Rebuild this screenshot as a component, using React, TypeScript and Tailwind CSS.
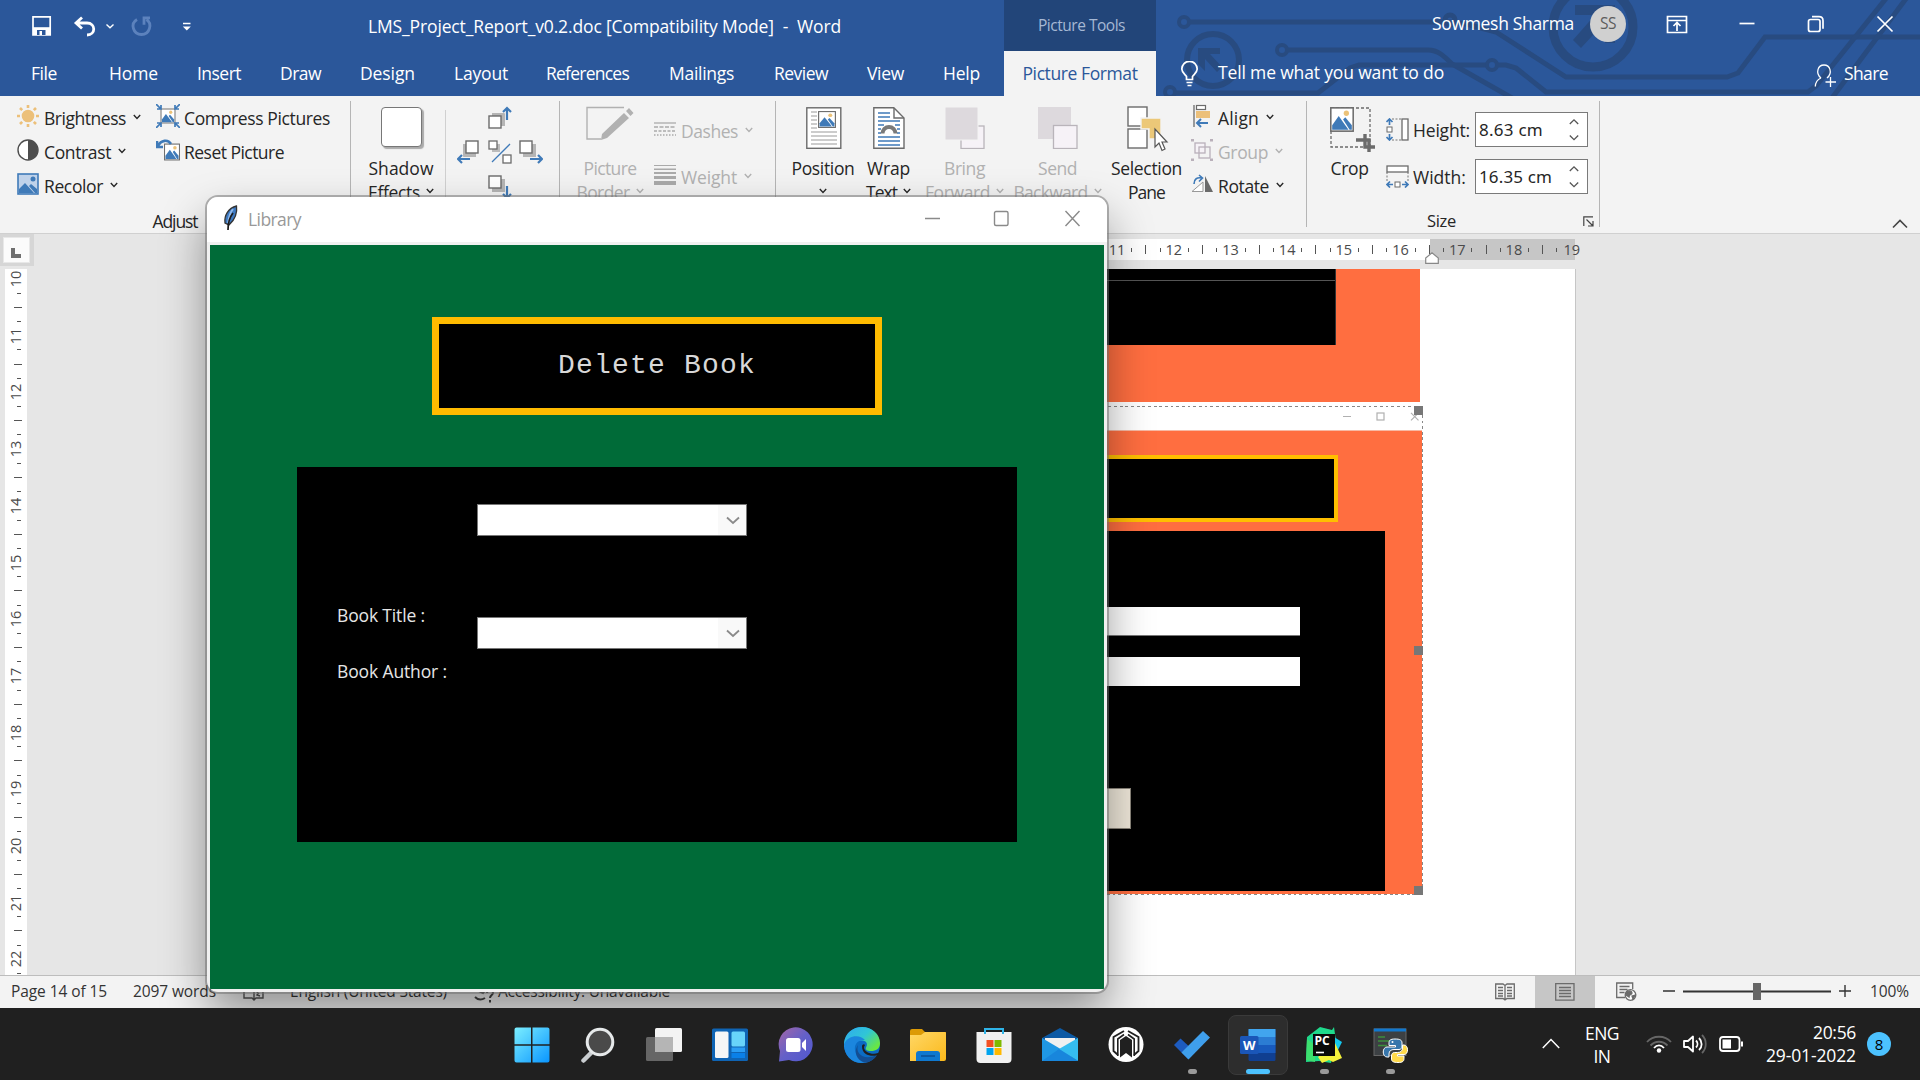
import { useLayoutEffect, useRef, type ReactNode } from "react";

/* Text line spread to a fixed width through letter spacing. */
function T({ w, children, className = "" }: { w: number; children: string; className?: string }) {
  const ref = useRef<HTMLSpanElement>(null);
  useLayoutEffect(() => {
    const el = ref.current;
    if (!el) return;
    el.style.letterSpacing = "0px";
    const natural = el.getBoundingClientRect().width;
    el.style.letterSpacing = `${(w - natural) / children.length}px`;
  }, [w, children]);
  return (
    <span ref={ref} className={"inline-block whitespace-pre shrink-0 " + className}>
      {children}
    </span>
  );
}

function Chev({ className = "" }: { className?: string }) {
  return (
    <svg width="8" height="6" viewBox="0 0 8 6" className={"shrink-0 " + className} fill="none" stroke="currentColor" strokeWidth="1.4">
      <path d="M0.8 1 4 4.4 7.2 1" />
    </svg>
  );
}

function Picture({ x = 0, y = 0, w = 22, h = 22, fill = "#fff" }) {
  return (
    <g transform={`translate(${x} ${y}) scale(${w / 22} ${h / 22})`}>
      <rect x=".75" y=".75" width="20.5" height="20.5" fill={fill} stroke="#6b6b6b" strokeWidth="1.4" />
      <path d="M2 20v-4l6-8 6 8 3 4z" fill="#3f7ab8" />
      <path d="M12 11l2-2 6 7v4h-2z" fill="#3f7ab8" />
      <circle cx="15" cy="5.5" r="2.4" fill="#ecc278" />
    </g>
  );
}

/* ---------- Title bar and tabs ---------- */

function Circuit() {
  return (
    <svg width="764" height="96" viewBox="1156 0 764 96" className="absolute left-[1156px] top-0" fill="none" stroke="#284b80" strokeWidth="5">
      <circle cx="1184" cy="22" r="5" strokeWidth="4" />
      <path d="M1189 22H1450l16 2 30 8 70 45H1727l11-4 27-36H1920" />
      <circle cx="1450" cy="20" r="5" />
      <circle cx="1213" cy="60" r="26" strokeWidth="6" />
      <path d="M1198 64V48h22v6h-10l12 13-5 5-12-13v12z" fill="#284b80" stroke="none" />
      <circle cx="1282" cy="50" r="5" strokeWidth="4" />
      <path d="M1288 50H1428c10 0 16 6 24 14l60 34" />
      <circle cx="1170" cy="92" r="5" strokeWidth="4" />
      <path d="M1176 93H1318l32-25 9-3H1486" />
      <circle cx="1492" cy="65" r="5" strokeWidth="4" />
      <path d="M1498 65H1506l10 3 30 24H1808l8-6L1888-4M1832 98l76-102" />
      <circle cx="1593" cy="27" r="40" strokeWidth="9" />
      <path d="M1575 5h40v38h-10V22l-24 26-8-8 22-25h-20z" fill="#284b80" stroke="none" />
    </svg>
  );
}

const tabs: [string, number, number][] = [
  ["File", 31, 26],
  ["Home", 52, 49],
  ["Insert", 39, 44],
  ["Draw", 39, 41],
  ["Design", 39, 55],
  ["Layout", 39, 54],
  ["References", 38, 83],
  ["Mailings", 40, 65],
  ["Review", 40, 54],
  ["View", 39, 37],
  ["Help", 39, 37],
];

function Header() {
  return (
    <header className="relative h-24 bg-[#2b579a] text-white">
      <Circuit />
      <div className="relative flex h-[51px] items-center">
        <svg width="200" height="24" viewBox="0 0 200 24" className="shrink-0" fill="none">
          <path d="M33 2.8h17.2v18H33z" stroke="#fff" strokeWidth="1.7" />
          <path d="M33 13.2h17.2v7.6H33z" fill="#fff" />
          <path d="M37 16h8.5v5H37z" fill="#2b579a" />
          <path d="M39.5 17h2.5v4h-2.5z" fill="#fff" />
          <path d="M82 3.5 76 9l6 5.5M76.5 9H87c9 0 9 12 0 12" stroke="#fff" strokeWidth="2.8" />
          <path d="M106.5 10.5l3.5 3.3 3.5-3.3" stroke="#fff" strokeWidth="1.4" />
          <path d="M137 5.5c-7 4-4 15 4.5 15s11-11 5-15M150 3.8h-6v7" stroke="#5c82bd" strokeWidth="2.8" />
          <path d="M183 9.5h7.5" stroke="#fff" strokeWidth="1.5" />
          <path d="M182.8 12.5h8l-4 4z" fill="#fff" />
        </svg>
        <div className="ml-[168px] flex w-[636px] text-[17.5px] leading-6">
          <T w={473}>{"LMS_Project_Report_v0.2.doc [Compatibility Mode]  -  Word"}</T>
        </div>
        <div className="flex h-full w-[152px] items-center justify-center bg-[#224579] pl-[3px] text-[15.5px] text-[#a6b8d4]">
          <T w={87}>Picture Tools</T>
        </div>
        <div className="ml-[276px] flex h-full items-center pb-1 text-[17.5px]">
          <T w={142}>Sowmesh Sharma</T>
          <div className="ml-4 flex size-9 items-center justify-center rounded-full bg-[#d0d0d0] text-[15.5px] text-[#5d5d5d]">
            <T w={16}>SS</T>
          </div>
          <svg width="230" height="24" viewBox="1665.5 11 230 24" className="ml-[39px]" fill="none" stroke="#fff" strokeWidth="1.7">
            <path d="M1668 15.5h19v16h-19zM1668 19.5h19M1677.5 30v-8M1674 25l3.5-3.5 3.5 3.5" />
            <path d="M1740 22.5h15" />
            <rect x="1809" y="18.5" width="11.5" height="12" rx="2" />
            <path d="M1812.5 15.7h7c2.5 0 4 1.5 4 4v8" />
            <path d="M1878 15.5l15 15M1893 15.5l-15 15" />
          </svg>
        </div>
      </div>
      <nav className="relative flex h-[45px] items-center text-[17.5px]">
        {tabs.map(([t, gap, w]) => (
          <div key={t} className="flex shrink-0 justify-end" style={{ width: gap + w }}>
            <T w={w}>{t}</T>
          </div>
        ))}
        <div className="ml-[24px] flex h-full w-[152px] shrink-0 items-center justify-center bg-[#f3f3f3] text-[#2b579a]">
          <T w={115}>Picture Format</T>
        </div>
        <svg width="20" height="26" viewBox="0 0 20 26" className="ml-[24px] shrink-0" fill="none" stroke="#fff" strokeWidth="1.7">
          <path d="M6.5 18.5v-3C4 12.5 1.8 11 1.8 8a7.7 7.7 0 0 1 15.4 0c0 3-2.2 4.5-4.7 7.5v3zM6.5 21.5h6M7.5 24.5h4" />
        </svg>
        <div className="ml-[18px] flex w-[596px] shrink-0 pb-0.5">
          <T w={226}>Tell me what you want to do</T>
        </div>
        <svg width="24" height="24" viewBox="0 0 24 24" className="mt-1 shrink-0" fill="none" stroke="#fff" strokeWidth="1.3">
          <path d="M7 14c-6-5-3-13 3-13s9 8 3 13M7 14C3.500 15.500 1.500 18.500 1.300 22.500M11.500 18H22M16.500 13v10" />
        </svg>
        <T w={44} className="ml-[6px]">Share</T>
      </nav>
    </header>
  );
}

/* ---------- Ribbon ---------- */

function Row({ icon, text, w, chev = true, dim = false, h = "h-[34px]" }: { icon: ReactNode; text: string; w: number; chev?: boolean; dim?: boolean; h?: string }) {
  return (
    <div className={"flex items-center " + h + (dim ? " text-[#b1b1b1]" : "")}>
      {icon}
      <T w={w} className="ml-[5px]">{text}</T>
      {chev && <Chev className="ml-[7px] -mt-0.5" />}
    </div>
  );
}

function Big({ icon, a, aw, b, bw, chev = true, width, dim = false }: { icon: ReactNode; a: string; aw: number; b?: string; bw?: number; chev?: boolean; width: string; dim?: boolean }) {
  return (
    <div className={"flex shrink-0 flex-col items-center " + width + (dim ? " text-[#b1b1b1]" : "")}>
      <div className="flex h-[60px] items-start pt-[10px]">{icon}</div>
      <div className="flex h-6 items-center">
        <T w={aw}>{a}</T>
      </div>
      <div className="flex h-6 items-center gap-[6px]">
        {b && <T w={bw ?? 0}>{b}</T>}
        {chev && <Chev className="-mt-0.5" />}
      </div>
    </div>
  );
}

function Nudge({ dir }: { dir: "up" | "down" | "left" | "right" }) {
  const arrows = {
    up: "M19 14V2M15 6l4-4 4 4",
    down: "M19 11v12M15 19l4 4 4-4",
    left: "M13 19H1M5 15l-4 4 4 4",
    right: "M11 19h12M19 15l4 4-4 4",
  };
  const sx = dir === "left" ? 9 : 1;
  const sy = dir === "up" ? 10 : 1;
  const ox = dir === "left" ? -3 : 3;
  const oy = dir === "up" ? -3 : 3;
  return (
    <svg width="24" height="24" viewBox="0 0 24 24" fill="none">
      <rect x={sx + ox} y={sy + oy} width="13" height="13" fill="#b5b5b5" />
      <path d={arrows[dir]} stroke="#f3f3f3" strokeWidth="4" />
      <rect x={sx} y={sy} width="12" height="12" fill="#fff" stroke="#6b6b6b" strokeWidth="1.4" />
      <path d={arrows[dir]} stroke="#3f7ab8" strokeWidth="2.2" />
    </svg>
  );
}

function Field({ text, w }: { text: string; w: number }) {
  return (
    <div className="ml-[5px] flex h-[35px] w-[113px] items-center justify-between border border-[#7a7a7a] bg-white pr-2 pl-[3px]">
      <T w={w} className="font-['Noto_Sans'] text-[17px]">{text}</T>
      <svg width="10" height="24" viewBox="0 0 10 24" fill="none" stroke="#555" strokeWidth="1.3">
        <path d="M.8 6 5 1.8 9.2 6M.8 17.5l4.2 4.2 4.2-4.2" />
      </svg>
    </div>
  );
}

function Ribbon() {
  return (
    <section className="flex h-[138px] border-b border-[#d0d0d0] bg-[#f3f3f3] text-[17.5px] leading-6 text-[#262626]">
      <div className="flex w-[350px] shrink-0 flex-col">
        <div className="flex h-[113px] pt-[5px] pl-[17px]">
          <div className="w-[139px]">
            <Row
              text="Brightness"
              w={82}
              icon={
                <svg width="22" height="22" viewBox="0 0 22 22" className="-mt-1" stroke="#ecc07a" strokeWidth="2.6">
                  <circle cx="11" cy="11" r="5" fill="#ecc07a" />
                  <path d="M11 0v3M11 19v3M0 11h3M19 11h3M3 3l2.2 2.2M16.8 16.8 19 19M19 3l-2.2 2.2M5.2 16.8 3 19" />
                </svg>
              }
            />
            <Row
              text="Contrast"
              w={67}
              icon={
                <svg width="22" height="22" viewBox="0 0 22 22" className="-mt-1">
                  <circle cx="11" cy="11" r="10" fill="#fff" stroke="#4d4d4d" strokeWidth="1.4" />
                  <path d="M11 1a10 10 0 0 1 0 20z" fill="#4d4d4d" />
                </svg>
              }
            />
            <Row
              text="Recolor"
              w={59}
              icon={
                <svg width="22" height="22" viewBox="0 0 22 22" className="-mt-1">
                  <rect x="1" y="1" width="20" height="20" fill="#bfd2ea" stroke="#3f7ab8" strokeWidth="1.6" />
                  <path d="M2 20v-4l6-6 9 10zM12 13l2-2 6 5v4h-2z" fill="#3f7ab8" />
                  <circle cx="16" cy="6" r="2.5" fill="#3f7ab8" />
                </svg>
              }
            />
          </div>
          <div>
            <Row
              text="Compress Pictures"
              w={146}
              chev={false}
              icon={
                <svg width="24" height="24" viewBox="0 0 24 24" className="-mt-1 -mr-[1px]" fill="none">
                  <Picture x={4.5} y={4.5} w={15} h={15} />
                  <path d="M0 0l5 5M5 1v4H1M24 0l-5 5M19 1v4h4M0 24l5-5M1 19h4v4M24 24l-5-5M23 19h-4v4" stroke="#3f7ab8" strokeWidth="1.7" />
                </svg>
              }
            />
            <Row
              text="Reset Picture"
              w={100}
              chev={false}
              icon={
                <svg width="24" height="22" viewBox="0 0 24 22" className="-mt-1 -mr-[1px]" fill="none">
                  <Picture x={8} y={4.5} w={16} h={17} />
                  <path d="M2 7c3-6 10-7 13-2M1 2v6h6" stroke="#3f7ab8" strokeWidth="2.6" />
                </svg>
              }
            />
          </div>
        </div>
        <div className="flex h-6 items-center justify-center">
          <T w={45}>Adjust</T>
        </div>
      </div>

      <div className="flex w-[209px] shrink-0">
        <div className="mt-[5px] h-[126px] w-px bg-[#b5b5b5]" />
        <Big
          width="w-[100px]"
          a="Shadow"
          aw={65}
          b="Effects"
          bw={52}
          icon={<div className="mt-px h-[40px] w-[41px] rounded-[4px] border-[1.5px] border-[#777] bg-white shadow-[2px_2px_1px_#aaa]" />}
        />
        <div className="mt-[14px] ml-[-6px] h-[117px] w-px bg-[#d0d0d0]" />
        <div className="ml-[11px] grid h-[116px] w-[86px] grid-cols-[24px_24px_24px] grid-rows-[34px_35px_24px] gap-x-[7px] pt-[10px]">
          <span />
          <Nudge dir="up" />
          <span />
          <Nudge dir="left" />
          <svg width="24" height="24" viewBox="0 0 24 24" fill="#fff" stroke="#6b6b6b" strokeWidth="1.3">
            <rect x="4" y="4" width="8" height="8" fill="#bbb" stroke="none" />
            <rect x="1" y="1" width="8" height="8" />
            <rect x="15" y="15" width="8" height="8" />
            <path d="M22 4 4 22" stroke="#3f7ab8" />
          </svg>
          <Nudge dir="right" />
          <span />
          <Nudge dir="down" />
          <span />
        </div>
      </div>

      <div className="flex w-[216px] shrink-0">
        <div className="mt-[5px] h-[126px] w-px bg-[#b5b5b5]" />
        <Big
          width="w-[100px]"
          dim
          a="Picture"
          aw={53}
          b="Border"
          bw={53}
          icon={
            <svg width="48" height="36" viewBox="0 0 48 36" fill="none">
              <path d="M38 1.5H1V33h14" stroke="#b1b1b1" strokeWidth="1.4" />
              <path d="m16 28 22-21 5 5-22 20-6 2zM40 5l3-3 4.5 5-3 3z" fill="#b1b1b1" />
            </svg>
          }
        />
        <div className="-ml-1.5 pt-[12px]">
          <Row
            dim
            text="Dashes"
            w={57}
            h="h-[46px]"
            icon={
              <svg width="22" height="16" viewBox="0 0 22 16" className="-mt-1" stroke="#aaa" strokeWidth="1.3">
                <path d="M0 2h22" />
                <path d="M0 6h22" strokeDasharray="4 1.5" />
                <path d="M0 10h22" strokeDasharray="3 1.5" />
                <path d="M0 14h22" strokeDasharray="1.5 1.5" />
              </svg>
            }
          />
          <Row
            dim
            text="Weight"
            w={56}
            h="h-[46px]"
            icon={
              <svg width="22" height="20" viewBox="0 0 22 20" className="-mt-1" fill="#aaa">
                <path d="M0 0h22v1H0zM0 3.5h22v1.5H0zM0 7h22v2H0zM0 11h22v3H0zM0 16h22v4H0z" />
              </svg>
            }
          />
        </div>
      </div>

      <div className="flex w-[531px] shrink-0">
        <div className="mt-[5px] mr-[14px] h-[126px] w-px bg-[#b5b5b5]" />
        <Big
          width="w-[66px]"
          a="Position"
          aw={63}
          icon={
            <svg width="36" height="42" viewBox="0 0 36 42" className="ml-px mt-px" fill="none">
              <rect x=".8" y=".8" width="34" height="40.5" fill="#fff" stroke="#6b6b6b" strokeWidth="1.4" />
              <path d="M5 5h6M5 9h6M5 13h6M5 17h6M5 21h6M5 25h26M5 29h26M5 33h26M5 37h26" stroke="#999" strokeWidth="1.2" />
              <Picture x={12} y={4} w={18} h={17} />
            </svg>
          }
        />
        <Big
          width="w-[65px]"
          a="Wrap"
          aw={43}
          b="Text"
          bw={31}
          icon={
            <svg width="32" height="42" viewBox="0 0 32 42" className="ml-px mt-px" fill="none">
              <path d="M.8.8h20L31 11v30.3H.8z" fill="#fff" stroke="#6b6b6b" strokeWidth="1.4" />
              <path d="M21 1v10h10" stroke="#6b6b6b" strokeWidth="1.4" />
              <path d="M5 6h12M5 10h12M5 14h22M5 18h6M22 18h5M5 22h3M24 22h3M5 26h3M24 26h3M5 30h22M5 34h22M5 38h22" stroke="#3f7ab8" strokeWidth="1.6" />
              <path d="M9.5 26.5a6.5 6.5 0 0 1 13 0" stroke="#7a7a7a" strokeWidth="4" />
            </svg>
          }
        />
        <Big
          width="w-[87px]"
          dim
          a="Bring"
          aw={41}
          b="Forward"
          bw={65}
          icon={
            <svg width="40" height="42" viewBox="0 0 40 42" className="mt-px">
              <rect x="16" y="19" width="23" height="22.5" fill="#f6f2f7" stroke="#b9b4ba" strokeWidth="1.3" />
              <rect x="0" y="0" width="33" height="33" fill="#ddd9dd" stroke="#f3f3f3" />
            </svg>
          }
        />
        <Big
          width="w-[99px]"
          dim
          a="Send"
          aw={39}
          b="Backward"
          bw={74}
          icon={
            <svg width="40" height="42" viewBox="0 0 40 42" className="mt-px">
              <rect x="0" y="0" width="33" height="32" fill="#ddd9dd" />
              <rect x="15.5" y="18.5" width="23.5" height="23" fill="#f6f2f7" stroke="#b9b4ba" strokeWidth="1.3" />
            </svg>
          }
        />
        <Big
          width="w-[79px]"
          chev={false}
          a="Selection"
          aw={71}
          b="Pane"
          bw={37}
          icon={
            <svg width="42" height="46" viewBox="0 0 42 46" className="ml-0.5" fill="#fff" stroke="#6b6b6b" strokeWidth="1.4">
              <rect x="1" y="1" width="19" height="19" />
              <rect x="1" y="23" width="19" height="19" />
              <path d="M14 12h20v21H22V23h-8z" fill="#ecc878" stroke="#f3f3f3" />
              <path d="M28 23v18l4-4 3 7.5 3-1.5-3-7h5z" stroke="#555" strokeWidth="1.2" />
            </svg>
          }
        />
        <div className="ml-[5px] pt-[5px]">
          <Row
            text="Align"
            w={41}
            icon={
              <svg width="22" height="24" viewBox="0 0 22 24" className="-mt-1" fill="none">
                <path d="M3 1v22" stroke="#6b6b6b" strokeWidth="1.3" />
                <rect x="5.5" y="1.5" width="9" height="4" stroke="#6b6b6b" strokeWidth="1.2" fill="#fff" />
                <rect x="5" y="7" width="14" height="7" fill="#ecc07a" />
                <path d="M17 19H6M10 15l-4 4 4 4" stroke="#3f7ab8" strokeWidth="2" />
              </svg>
            }
          />
          <Row
            dim
            text="Group"
            w={50}
            icon={
              <svg width="22" height="22" viewBox="0 0 22 22" className="-mt-1" fill="none" stroke="#b9b0ba" strokeWidth="1.3">
                <rect x="4" y="4" width="10" height="10" fill="#f6f2f7" />
                <rect x="8" y="8" width="11" height="11" />
                <path d="M0 1h3M19 1h3M0 21h3M19 21h3" strokeWidth="3" />
              </svg>
            }
          />
          <Row
            text="Rotate"
            w={51}
            icon={
              <svg width="22" height="20" viewBox="0 0 22 20" className="-mt-1" fill="none">
                <path d="M1 17.5 12 8v9.5z" fill="#fff" stroke="#999" />
                <path d="M14 18V2l8 16z" fill="#6b6b6b" />
                <path d="M3 10c0-5 3-7 8-6M8 1l3.5 3L8 7.5" stroke="#3f7ab8" strokeWidth="1.6" />
              </svg>
            }
          />
        </div>
      </div>

      <div className="flex w-[294px] shrink-0">
        <div className="mt-[5px] h-[126px] w-px bg-[#b5b5b5]" />
        <div className="flex flex-col">
          <div className="flex h-[113px]">
            <Big
              width="w-[85px]"
              chev={false}
              a="Crop"
              aw={38}
              icon={
                <svg width="45" height="46" viewBox="0 0 45 46" className="mt-px ml-1.5" fill="none">
                  <path d="M1 1h39v39H1z" stroke="#6b6b6b" strokeWidth="1.3" strokeDasharray="3 2" />
                  <Picture x={0} y={0} w={24} h={25} />
                  <path d="M35 27v13h10M26 33h13v12" stroke="#6b6b6b" strokeWidth="3.4" />
                </svg>
              }
            />
            <div className="-ml-[6px] pt-[10px]">
              <div className="flex h-[47px] items-center">
                <svg width="23" height="23" viewBox="0 0 23 23" fill="none">
                  <path d="M6 1h10M6 22h10" stroke="#777" strokeDasharray="2 1.5" />
                  <rect x="16" y="1" width="6" height="21" fill="#fff" stroke="#6b6b6b" strokeWidth="1.3" />
                  <rect x="1" y="9" width="5" height="5" stroke="#6b6b6b" fill="#fff" />
                  <path d="M3.5 7V1M.5 4l3-3 3 3M3.5 16v6M.5 19l3 3 3-3" stroke="#3f7ab8" strokeWidth="1.7" />
                </svg>
                <T w={57} className="ml-1">Height:</T>
                <Field text="8.63 cm" w={64} />
              </div>
              <div className="flex h-[47px] items-center">
                <svg width="23" height="23" viewBox="0 0 23 23" fill="none">
                  <path d="M1 7v10M22 7v10" stroke="#777" strokeDasharray="2 1.5" />
                  <rect x="1" y="1" width="21" height="6" fill="#fff" stroke="#6b6b6b" strokeWidth="1.3" />
                  <rect x="9" y="17" width="5" height="5" stroke="#6b6b6b" fill="#fff" />
                  <path d="M7 19.5H1M4 16.5l-3 3 3 3M16 19.5h6M19 16.5l3 3-3 3" stroke="#3f7ab8" strokeWidth="1.7" />
                </svg>
                <div className="flex w-[61px] pl-1">
                  <T w={53}>Width:</T>
                </div>
                <Field text="16.35 cm" w={73} />
              </div>
            </div>
          </div>
          <div className="flex h-6 items-center">
            <T w={29} className="ml-[120px] text-[16.5px]">Size</T>
            <svg width="11" height="11" viewBox="0 0 11 11" className="ml-[127px]" fill="none" stroke="#444" strokeWidth="1.2">
              <path d="M10 .8H.8V10M3.5 3.5 10 10M10 5v5H5" />
            </svg>
          </div>
        </div>
        <div className="mt-[5px] ml-auto h-[126px] w-px bg-[#b5b5b5]" />
      </div>
      <svg width="16" height="10" viewBox="0 0 16 10" className="mt-[123px] ml-[292px]" fill="none" stroke="#444" strokeWidth="1.6">
        <path d="M1 8.5 8 1.5l7 7" />
      </svg>
    </section>
  );
}

/* ---------- Document area ---------- */

const hNums = [11, 12, 13, 14, 15, 16, 17, 18];
const vNums = [10, 11, 12, 13, 14, 15, 16, 17, 18, 19, 20, 21, 22];

function HRuler() {
  return (
    <div className="ml-[1066px] flex h-[21px] shrink-0 text-[14.5px] leading-[21px] text-[#4a4a4a]">
      <div className="relative flex w-[475px] shrink-0 bg-[linear-gradient(to_right,#fff_330px,#c6c6c6_330px)] pl-[10px]">
        {hNums.map((n) => (
          <div key={n} className="grid w-[56.7px] shrink-0 grid-cols-4 items-center justify-items-center">
            <span className="w-5 text-center">{n}</span>
            <i className="ml-px h-[4px] w-px bg-[#555]" />
            <i className="ml-px h-[9px] w-px bg-[#555]" />
            <i className="ml-px h-[4px] w-px bg-[#555]" />
          </div>
        ))}
        <span>19</span>
        <svg width="14" height="12" viewBox="0 0 14 12" className="absolute top-[13px] left-[325px]">
          <path d="M.7 11.3V6L7 .8 13.3 6v5.3z" fill="#fff" stroke="#888" strokeWidth="1.2" />
        </svg>
      </div>
    </div>
  );
}

function VRuler() {
  return (
    <div className="ml-[5px] h-[706px] w-[22px] shrink-0 overflow-hidden bg-white pt-[3px] text-[14.5px] leading-[22px] text-[#4a4a4a]">
      {vNums.map((n) => (
        <div key={n} className="grid h-[56.7px] grid-rows-4 items-center justify-items-center">
          <span className="flex h-[14px] w-[22px] items-center justify-center pl-px">
            <span className="-rotate-90">{n}</span>
          </span>
          <i className="ml-[5px] h-px w-[4px] bg-[#555]" />
          <i className="ml-[4px] h-px w-[8px] bg-[#555]" />
          <i className="ml-[5px] h-px w-[4px] bg-[#555]" />
        </div>
      ))}
    </div>
  );
}

function Page() {
  return (
    <div className="ml-[273px] h-[706px] w-[1276px] shrink-0 overflow-hidden border-r border-[#c6c6c6] bg-white">
      <div className="h-[133px] w-[1120px] bg-[#ff6e40]">
        <div className="h-[76px] w-[1036px] border-r border-[#333] bg-black pt-[11px]">
          <div className="h-px bg-[#555]" />
        </div>
      </div>
      <div className="relative mt-[4px] h-[489px] w-[1123px] bg-[repeating-linear-gradient(135deg,#888_0_2px,#fff_2px_4px)] p-px pl-0">
        <div className="h-full bg-[#ff6e40]">
          <div className="flex h-[23px] items-center justify-end bg-white pr-[3px]">
            <svg width="76" height="9" viewBox="0 0 76 9" className="mb-1" fill="none" stroke="#b0b0b0" strokeWidth="1.2">
              <path d="M0 4.5h8M68 .8l7.5 7.5M75.5.8 68 8.3" />
              <rect x="34" y="1" width="7" height="7" />
            </svg>
          </div>
          <div className="h-px bg-[#f7b9a4]" />
          <div className="mt-[24px] h-[67px] w-[1038px] border-4 border-[#ffbf00] bg-black" />
          <div className="mt-[9px] h-[360px] w-[1085px] bg-black pt-[76px]">
            <div className="h-[29px] w-[1000px] border-b border-[#777] bg-white" />
            <div className="mt-[21px] h-[29px] w-[1000px] bg-white" />
            <div className="mt-[102px] h-[41px] w-[831px] border border-[#8b857b] bg-[#efe8da]" />
          </div>
        </div>
        <i className="absolute top-0 right-0 size-[9px] bg-[#777]" />
        <i className="absolute top-[240px] right-0 size-[9px] bg-[#777]" />
        <i className="absolute right-0 bottom-0 size-[9px] bg-[#777]" />
      </div>
    </div>
  );
}

function Doc() {
  return (
    <main className="flex h-[741px] flex-col overflow-hidden bg-[#e6e6e6]">
      <div className="flex h-[35px] shrink-0">
        <div className="h-8 w-[34px] shrink-0 bg-[#d6d6d6] p-[3px]">
          <div className="flex h-[26px] w-[27px] border border-[#e8e8e8] bg-[#fbfbfb]">
            <i className="mt-[10px] ml-[7px] size-[10px] border-b-4 border-l-4 border-[#6f6f6f]" />
          </div>
        </div>
        <div className="pt-[5px]">
          <HRuler />
        </div>
      </div>
      <div className="flex">
        <VRuler />
        <Page />
      </div>
    </main>
  );
}

function StatusBar() {
  return (
    <footer className="flex h-[33px] items-center border-t border-[#bdbdbd] bg-[#f3f3f3] pl-[11px] text-[15.5px] text-[#333]">
      <T w={96}>Page 14 of 15</T>
      <T w={83} className="ml-[26px]">2097 words</T>
      <svg width="22" height="20" viewBox="0 0 22 20" className="ml-[27px]" fill="none" stroke="#555" strokeWidth="1.4">
        <path d="M1 2v14h8l2 2 2-2h7V9M11 4v14M1 2h7l3 2 3-2M14 11c1-3 4-3 6-1M16 11l-2 2 3 1" />
      </svg>
      <T w={157} className="ml-[25px]">English (United States)</T>
      <svg width="22" height="22" viewBox="0 0 22 22" className="ml-[26px]" fill="none" stroke="#444" strokeWidth="2">
        <path d="M2 16c3 3 7 3 10 1M3 4a9 9 0 0 1 12 2M6 10l4 2 4-5" />
        <path d="M14 12c0-4 6-4 6 0 0 2-3 2-3 5M17 19v2.5" />
      </svg>
      <T w={172} className="ml-[3px]">Accessibility: Unavailable</T>
      <svg width="20" height="18" viewBox="0 0 20 18" className="ml-[825px]" fill="none" stroke="#6b6b6b" strokeWidth="1.3">
        <path d="M.7 1H8l2 1.5L12 1h7.3v14.500H12L10 17l-2-1.500H.7zM10 2.5V17M3 4.5h5M3 7.5h5M3 10.5h5M3 13h5M12 4.5h5M12 7.5h5M12 10.500h5M12 13h5" />
      </svg>
      <div className="ml-[20px] flex h-full w-[60px] items-center justify-center bg-[#c6c6c6]">
        <svg width="20" height="18" viewBox="0 0 20 18" fill="none" stroke="#6b6b6b" strokeWidth="1.3">
          <path d="M.7.7h18.3v16.5H.7zM4 4.5h12M4 7.5h12M4 10.5h12M4 13.5h12" />
        </svg>
      </div>
      <svg width="21" height="20" viewBox="0 0 21 20" className="ml-[21px]" fill="none" stroke="#6b6b6b" strokeWidth="1.3">
        <path d="M9 15.5H.7V1h16v6M3.5 4.5h10M3.5 7.5h8M3.5 10.5h5" />
        <circle cx="14.5" cy="13" r="5.3" fill="#fff" />
        <path d="M11 10c3-2 5-1 5 1s-3 1-3 4l-3-2zM16 14l3-1-2 4z" fill="#6b6b6b" />
      </svg>
      <svg width="190" height="18" viewBox="0 0 190 18" className="ml-[26px]" fill="none" stroke="#333" strokeWidth="1.4">
        <path d="M0 8h12M176 8h12M182 2v12" />
        <path d="M20 8.5h148" strokeWidth="2" />
        <path d="M90 0h8v17h-8z" fill="#666" stroke="none" />
      </svg>
      <T w={39} className="ml-[17px]">100%</T>
    </footer>
  );
}

/* ---------- Library window ---------- */

function Combo() {
  return (
    <div className="flex h-[32px] w-[270px] border border-[#777] bg-white">
      <div className="ml-auto flex w-[28px] items-center justify-center bg-[#f9f9f9] pl-0.5">
        <svg width="14" height="9" viewBox="0 0 14 9" fill="none" stroke="#8a8a8a" strokeWidth="1.8">
          <path d="M1 1.5l6 5.5 6-5.5" />
        </svg>
      </div>
    </div>
  );
}

function LibraryWindow() {
  return (
    <div className="absolute top-[197px] left-[207px] z-10 h-[795px] w-[900px] overflow-hidden rounded-[11px] bg-[#f0f0f0] shadow-[0_0_0_2px_rgba(110,110,110,0.5),0_22px_46px_rgba(0,0,0,0.4)]">
      <div className="flex h-[45px] items-center bg-white pl-[16px]">
        <svg width="16" height="26" viewBox="0 0 16 26" className="-mt-1" fill="none">
          <path d="M2 18C1 11 5 3 13.500 1c1 7-2 14-7.500 19z" fill="#3c78c0" stroke="#333" strokeWidth="1.3" />
          <path d="M10 4C6 9 6 13 5 18" stroke="#8fb8ea" strokeWidth="2" />
          <path d="M10 8C6 13 5 17 5 25" stroke="#1b1b1b" strokeWidth="1.7" />
        </svg>
        <T w={53} className="ml-[9px] text-[17.5px] text-[#999]">Library</T>
        <svg width="156" height="17" viewBox="0 0 156 17" className="ml-[624px] -mt-0.5" fill="none" stroke="#8a8a8a" strokeWidth="1.4">
          <path d="M0 8.5h15M140.5 1l14 15M154.5 1l-14 15" />
          <rect x="69.5" y="1.5" width="13.5" height="14" rx="1.5" />
        </svg>
      </div>
      <div className="mt-[3px] ml-[3px] flex h-[744px] w-[894px] flex-col bg-[#006b38] pt-[72px]">
        <div className="ml-[222px] flex h-[98px] w-[450px] items-center justify-center border-[7px] border-[#ffbb00] bg-black pb-px text-[#d8d8d8]">
          <T w={198} className="font-['Liberation_Mono'] text-[28px]">Delete Book</T>
        </div>
        <div className="mt-[52px] ml-[87px] flex h-[375px] w-[720px] bg-black text-[17.5px] leading-6 text-[#e6e6e6]">
          <div className="w-[180px] pt-[136px] pl-[40px]">
            <T w={88} className="block">Book Title :</T>
            <T w={110} className="mt-[32px] block">Book Author :</T>
          </div>
          <div className="flex flex-col gap-[81px] pt-[37px]">
            <Combo />
            <Combo />
          </div>
        </div>
      </div>
    </div>
  );
}

/* ---------- Taskbar ---------- */

const icons: { node: ReactNode; run?: boolean; active?: boolean }[] = [
  {
    node: (
      <path d="M.5 2.5a2 2 0 0 1 2-2H17V17.3H.5zM18.5.5H33.5a2 2 0 0 1 2 2V17.3h-17zM.5 18.7H17V35.5H2.5a2 2 0 0 1-2-2zM18.5 18.7h17V33.5a2 2 0 0 1-2 2h-15z" fill="url(#win)" />
    ),
  },
  {
    node: (
      <>
        <path d="M3.5 33.5 12 25" stroke="#c9cdd0" strokeWidth="4.5" strokeLinecap="round" />
        <circle cx="20" cy="15" r="12.8" fill="#4a4a4a" stroke="#e6e9ea" strokeWidth="3" />
      </>
    ),
  },
  {
    node: (
      <>
        <rect x="9" y="1" width="27" height="24" rx="1.5" fill="#f3f3f3" />
        <rect x="0" y="10" width="27" height="24" rx="1.5" fill="#666" />
        <path d="M9 10h18v15H9z" fill="#b5b5b5" />
      </>
    ),
  },
  {
    node: (
      <>
        <rect x="0" y="1.5" width="36" height="32.5" rx="1.5" fill="#0f64b4" />
        <rect x="3" y="4.5" width="13.5" height="26.5" rx="1.5" fill="#f6f6f6" />
        <rect x="19.5" y="4.5" width="13.5" height="15" rx="1.5" fill="#68d4fa" />
        <path d="M19.5 20.5H33V25H19.5z" fill="#2a9df4" />
        <path d="M19.5 26H33v5H19.5z" fill="#0a80e8" />
      </>
    ),
  },
  {
    node: (
      <>
        <path d="M1 34.5 2 24a17 17 0 1 1 9 9z" fill="url(#chat)" />
        <rect x="8" y="11" width="14.5" height="14" rx="2.5" fill="#fff" />
        <path d="M24 16l4-4v12l-4-4z" fill="#fff" />
      </>
    ),
  },
  {
    node: (
      <>
        <circle cx="18" cy="18" r="18" fill="#0b6cc4" />
        <path d="M0 16C1 6 9 0 18 0c10 0 18 7 18 16 0 6-4 8-9 8-4 0-6-1.5-5-3.5 2-3 1-7-4-7-7 0-15 2-18 7z" fill="url(#edge)" />
        <path d="M0 17c4-9 16-10 21-4-9-1-13 8-8 15 2 4 6 7 10 7C10 39 0 30 0 17z" fill="#1b86de" />
        <path d="M14 18c-3 9 6 16 19 10-4 6-9 8-13 7.5C13 33 9 25 14 18z" fill="#134e93" />
        <path d="M20 20c0 6 9 8 14 6l1 1.5c-5 2.5-17 2-17-8 0-2 2-3 3-1.5z" fill="#202020" />
      </>
    ),
  },
  {
    node: (
      <>
        <path d="M0 4a2 2 0 0 1 2-2h10l3 3h21v6H0z" fill="#dc9a06" />
        <path d="M0 8h11l4-3h20l1 1v26a2 2 0 0 1-2 2H0z" fill="url(#fold)" />
        <path d="M6 34V27a3 3 0 0 1 3-3h18a3 3 0 0 1 3 3v7z" fill="#0f78cf" />
        <path d="M11 29h14" stroke="#0b4f94" strokeWidth="1.5" />
      </>
    ),
  },
  {
    node: (
      <>
        <path d="M9 8V2h18v6" stroke="#2fb4e8" strokeWidth="2" fill="none" />
        <path d="M.5 5h35v27a4 4 0 0 1-4 4h-27a4 4 0 0 1-4-4z" fill="#f1f1f1" />
        <path d="M9 5v2M27 5v2" stroke="#2fb4e8" strokeWidth="2" />
        <path d="M10.5 13h7v7h-7z" fill="#f25022" />
        <path d="M18.5 13h7v7h-7z" fill="#7fba00" />
        <path d="M10.5 21h7v7h-7z" fill="#00a4ef" />
        <path d="M18.5 21h7v7h-7z" fill="#ffb900" />
      </>
    ),
  },
  {
    node: (
      <>
        <path d="M0 11 18 1l18 10v6H0z" fill="#0c59a4" />
        <path d="M3 11h30v8L18 24 3 17z" fill="#f0f0f0" />
        <path d="M0 11l22 13L36 34H0z" fill="#1f97e4" />
        <path d="M36 11v23L17 22z" fill="#35bdf0" />
        <path d="M0 34l17-12L36 34z" fill="#1886dc" />
      </>
    ),
  },
  {
    node: (
      <>
        <circle cx="18" cy="17.5" r="17.5" fill="#fff" />
        <path d="M16 4 5.500 10v14l4.500 4M20 4l10.500 6v14l-4.500 4" stroke="#202020" strokeWidth="1.8" />
        <path d="M16 7.500 9.800 12v17M20 7.500l6.200 4.500v17" stroke="#202020" strokeWidth="1.600" />
        <path d="M12 13 18 9l6 4v17.500L18 26l-6 4.500z" fill="#202020" />
      </>
    ),
  },
  {
    run: true,
    node: (
      <>
        <path d="m0 18 6.5-6.5L21 25l-7 7z" fill="#1d5bbf" />
        <path d="M7.5 25.5 29 4l7 6.5-21.5 22z" fill="#3f9fec" />
      </>
    ),
  },
  {
    active: true,
    node: (
      <>
        <rect x="8.5" y="2" width="27" height="32" rx="1.5" fill="#103f91" />
        <path d="M8.5 2h27v8h-27z" fill="#41a5ee" />
        <path d="M8.5 10h27v8h-27z" fill="#2b7cd3" />
        <path d="M8.5 18h27v8h-27z" fill="#185abd" />
        <rect x="0" y="9" width="18.5" height="18" rx="1.5" fill="#1a56b8" />
        <text x="9.2" y="22.5" textAnchor="middle" fill="#fff" fontSize="13" fontWeight="700" fontFamily="Open Sans">W</text>
      </>
    ),
  },
  {
    run: true,
    node: (
      <>
        <path d="M1 10 14 0l12 3 2-3 2 14-5 22-12-2L0 35z" fill="#1fd98c" />
        <path d="M28 10l8 5-4 8-6 0z" fill="#14c8ef" />
        <path d="M12 30 29 16l7 15-9 4-4-2-7 3z" fill="#f4f13a" />
        <path d="M1 12 9 18v17L0 33z" fill="#3ddf6e" />
        <rect x="7" y="7" width="22" height="22" fill="#0a0a0a" />
        <text x="8.5" y="18" fill="#fff" fontSize="12" fontWeight="700" fontFamily="Open Sans">PC</text>
        <path d="M10 25.5h8" stroke="#fff" strokeWidth="1.6" />
      </>
    ),
  },
  {
    run: true,
    node: (
      <>
        <rect x="2" y="2" width="32" height="26.5" fill="#3c4043" stroke="#666" />
        <path d="M2 1.5h32v3H2z" fill="#1178cf" />
        <path d="M6 10h7M6 14h12M6 18.5h9" stroke="#3d8f3d" strokeWidth="1.3" />
        <g stroke="#fff" strokeWidth="1">
          <path d="M24 12c-5 0-6 1.5-6 4v2.5h6.5v1.5H16c-5 0-5 10 0 10h2v-3c0-3 2-4.5 5-4.5h5c2 0 3-1.5 3-3.5V16c0-3-2-4-7-4z" fill="#3776ab" transform="translate(-1 0)" />
          <path d="M26 35.5c5 0 6-1.5 6-4V29h-6.5v-1.5H32c5 0 4.5-9.5 0-9.5h-1.5v3c0 3-2 4.5-5 4.5h-3c-2 0-3 1.5-3 3.5v3c0 2.5 2 3.5 6.5 3.5z" fill="#ffd94a" />
        </g>
        <circle cx="20.5" cy="15" r="1" fill="#fff" />
      </>
    ),
  },
];

function Taskbar() {
  return (
    <div className="relative z-20 flex h-[72px] items-center bg-[#202020] text-[17.5px] text-white">
      <svg width="0" height="0" className="absolute">
        <defs>
          <linearGradient id="win" gradientUnits="userSpaceOnUse" x1="0" y1="0" x2="36" y2="36"><stop offset="0" stopColor="#7df0ff" /><stop offset="1" stopColor="#0894ff" /></linearGradient>
          <linearGradient id="chat" x1="0" y1="0" x2="1" y2="1"><stop offset="0" stopColor="#a566a6" /><stop offset=".5" stopColor="#6460c8" /><stop offset="1" stopColor="#5058cf" /></linearGradient>
          <linearGradient id="edge" x1="0" y1="0" x2="1" y2=".7"><stop offset="0" stopColor="#2fa8f0" /><stop offset=".55" stopColor="#30c6d6" /><stop offset="1" stopColor="#6ae83f" /></linearGradient>
          <linearGradient id="fold" x1="0" y1="0" x2="1" y2="1"><stop offset="0" stopColor="#ffd766" /><stop offset="1" stopColor="#fbb91b" /></linearGradient>
        </defs>
      </svg>
      <div className="ml-[499px] flex shrink-0">
        {icons.map((ic, i) => (
          <div key={i} className="flex h-[72px] w-[66px] justify-center pt-[7px]">
            <div className={"flex h-[60px] w-[60px] flex-col items-center " + (ic.active ? "rounded-lg border border-[#3a3a3a] bg-[#2d2d2d] pt-[11px]" : "pt-[12px]")}>
              <svg width="36" height="36" viewBox="0 0 36 36" className="shrink-0" fill="none">{ic.node}</svg>
              {ic.run && <i className="mt-[6px] h-[5px] w-[9px] rounded-full bg-[#9a9a9a]" />}
              {ic.active && <i className="mt-[6px] h-[5px] w-[24px] shrink-0 rounded-full bg-[#4cc2ff]" />}
            </div>
          </div>
        ))}
      </div>
      <svg width="18" height="11" viewBox="0 0 18 11" className="-mt-0.5 ml-[119px]" fill="none" stroke="#fff" strokeWidth="1.5">
        <path d="M.8 10 9 1.5l8.2 8.5" />
      </svg>
      <div className="ml-[25px] flex w-[34px] flex-col items-center pt-0.5 leading-[23px]">
        <T w={34}>ENG</T>
        <T w={17}>IN</T>
      </div>
      <svg width="98" height="22" viewBox="0 0 98 22" className="ml-[27px]" fill="none" strokeWidth="1.8">
        <g stroke="#666">
          <path d="M1 9c6-7 18-7 24 0M4.5 12.5c5-5 12-5 17 0" />
          <path d="M56 2c5 5 5 13 0 18" />
        </g>
        <path d="M8 15c3-3.5 7-3.5 10 0" stroke="#fff" />
        <circle cx="13" cy="17.5" r="2.2" fill="#fff" />
        <path d="M38 8h4l5-4.5v15L42 14h-4zM50 7.5c2 2 2 5 0 7M53 5c3.5 3.5 3.5 9 0 12" stroke="#fff" strokeLinejoin="round" />
        <rect x="74" y="4" width="19.5" height="14" rx="3" stroke="#fff" />
        <path d="M95 8.5h2v5h-2z" fill="#fff" />
        <path d="M76.5 6.5h8.5v9h-8.5z" fill="#fff" />
      </svg>
      <div className="ml-[23px] flex w-[89px] flex-col items-end leading-[23px]">
        <T w={43}>20:56</T>
        <T w={90}>29-01-2022</T>
      </div>
      <div className="ml-[11px] flex size-6 items-center justify-center rounded-full bg-[#4cc2ff] text-[15px] text-black">8</div>
    </div>
  );
}

export default function App() {
  return (
    <div className="relative h-[1080px] w-[1920px] overflow-hidden bg-[#f3f3f3] font-['Open_Sans',sans-serif]">
      <Header />
      <Ribbon />
      <Doc />
      <StatusBar />
      <LibraryWindow />
      <Taskbar />
    </div>
  );
}
